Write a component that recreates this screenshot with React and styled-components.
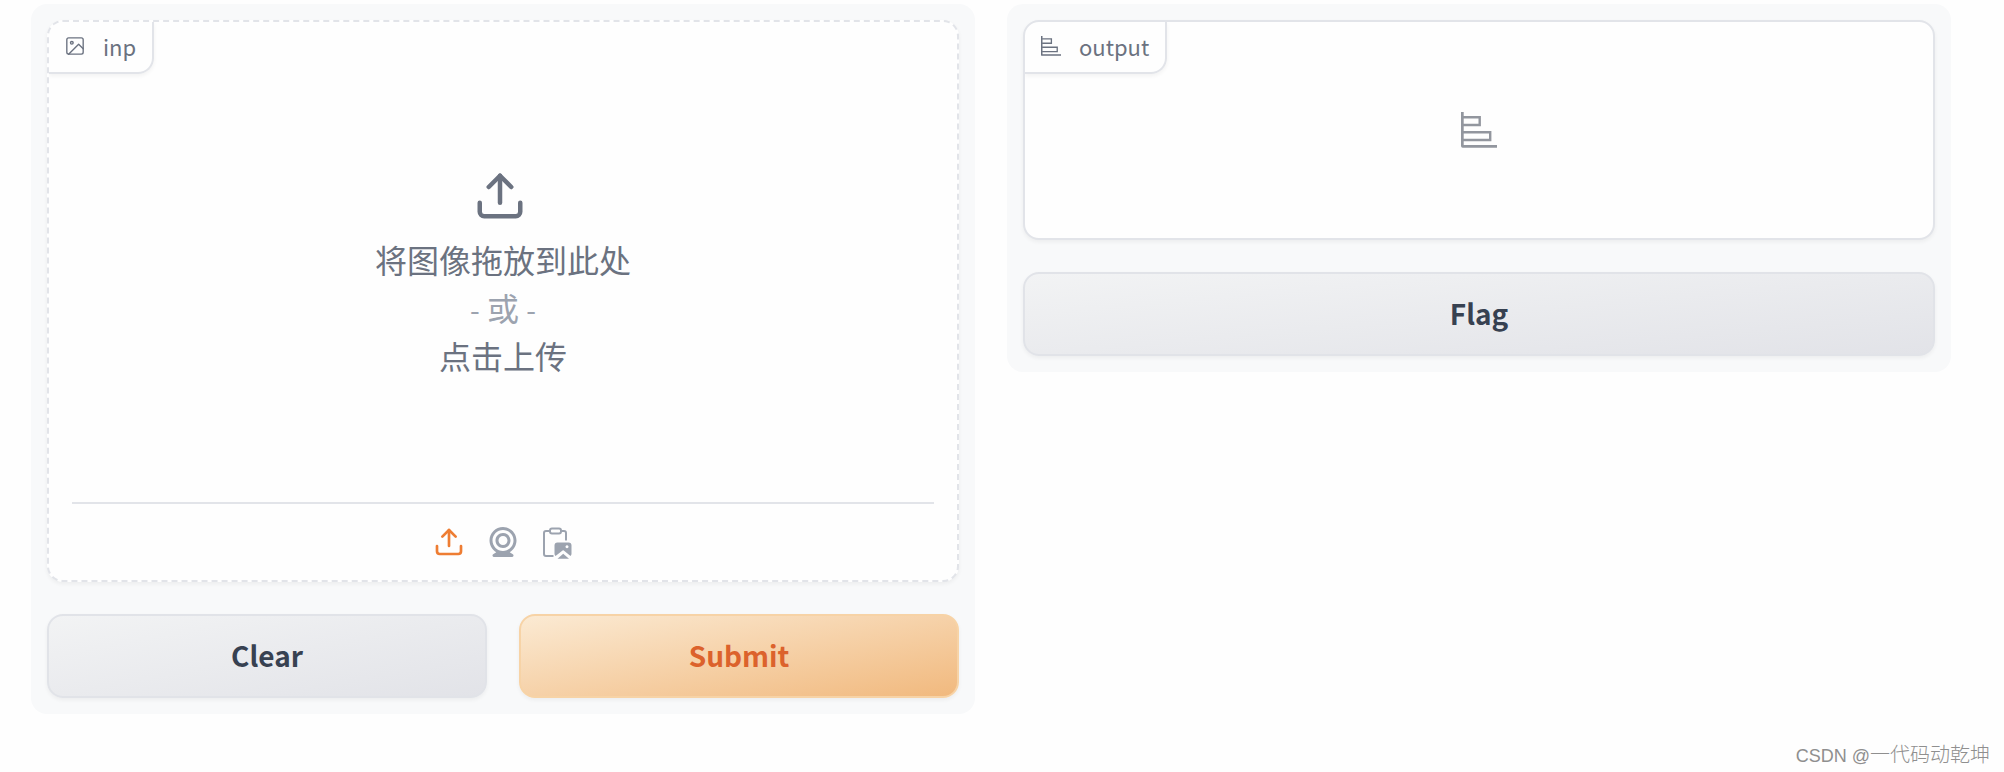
import styled, { createGlobalStyle, css } from 'styled-components';

const GlobalStyle = createGlobalStyle`
  *, *::before, *::after {
    box-sizing: border-box;
  }
  body {
    margin: 0;
    background: #fefefe;
    color: #6b7280;
    font-family: 'Noto Sans CJK SC', 'Open Sans', sans-serif;
  }
`;

const strokeProps = {
  fill: 'none',
  stroke: 'currentColor',
  strokeLinecap: 'round',
  strokeLinejoin: 'round',
  'aria-hidden': true,
};

const UploadIcon = ({ size }) => (
  <svg {...strokeProps} viewBox='0 0 24 24' width={size} height={size} strokeWidth='2'>
    <path d='M21 15v4a2 2 0 0 1-2 2H5a2 2 0 0 1-2-2v-4' />
    <polyline points='17 8 12 3 7 8' />
    <line x1='12' y1='3' x2='12' y2='15' />
  </svg>
);

const ImageIcon = () => (
  <svg {...strokeProps} viewBox='1 1 22 22' width='20' height='20' strokeWidth='1.5'>
    <rect x='3' y='3' width='18' height='18' rx='2' />
    <circle cx='8.5' cy='8.5' r='1.5' />
    <polyline points='21 15 16 10 5 21' />
  </svg>
);

const PlotIcon = ({ size }) => (
  <svg width={size} height={size} viewBox='0 0 36 36' fill='currentColor' aria-hidden>
    <path d='M0 0h2.700v33H36v2.700H1.700Q0 35.700 0 34z' />
    <path
      d='M2 5.300H18.700V13H2M2 20.300H29.200V28H2'
      fill='none'
      stroke='currentColor'
      strokeWidth='2.400'
    />
  </svg>
);

const WebcamIcon = () => (
  <svg width='36' height='36' viewBox='0 0 24 24' fill='currentColor' aria-hidden>
    <path d='M12 2c-4.963 0-9 4.038-9 9c0 3.328 1.82 6.232 4.513 7.79l-2.067 1.378A1 1 0 0 0 6 22h12a1 1 0 0 0 .555-1.832l-2.067-1.378C19.18 17.232 21 14.328 21 11c0-4.962-4.037-9-9-9zm0 16c-3.859 0-7-3.141-7-7c0-3.86 3.141-7 7-7s7 3.14 7 7c0 3.859-3.141 7-7 7z' />
    <path d='M12 6c-2.757 0-5 2.243-5 5s2.243 5 5 5s5-2.243 5-5s-2.243-5-5-5zm0 8c-1.654 0-3-1.346-3-3s1.346-3 3-3s3 1.346 3 3s-1.346 3-3 3z' />
  </svg>
);

const PasteIcon = () => (
  <svg width='36' height='36' viewBox='0 0 36 36' fill='none' aria-hidden>
    <g stroke='currentColor' strokeWidth='2'>
      <path d='M11 7H7a2 2 0 0 0-2 2v21a2 2 0 0 0 2 2h7.500M22 7h3a2 2 0 0 1 2 2v7.500' />
      <rect x='11' y='4.500' width='11' height='5' rx='2' />
    </g>
    <path
      fill='currentColor'
      fillRule='evenodd'
      d='M18.500 18.500h11a3 3 0 0 1 3 3v8.500a3 3 0 0 1-1 2l-6.700-5.500a1 1 0 0 0-1.200 0L16.500 32a3 3 0 0 1-1-2v-8.500a3 3 0 0 1 3-3zm9.500 2.800a1.500 1.500 0 1 0 .01 0zM18.500 34.800l5.700-5 5.800 5z'
    />
  </svg>
);

const App = () => {
  return (
    <>
      <GlobalStyle />
      <Main>
        <Panel>
          <Block $dashed>
            <Label htmlFor='inp'>
              <ImageIcon />
              inp
            </Label>
            <DropZone id='inp' type='button'>
              <IconWrap>
                <UploadIcon size={54} />
              </IconWrap>
              <span>将图像拖放到此处</span>
              <Or>
                <Dash>-</Dash> 或 <Dash>-</Dash>
              </Or>
              <span>点击上传</span>
            </DropZone>
            <Sources>
              <SourceButton type='button' aria-label='Upload file' $active>
                <UploadIcon size={32} />
              </SourceButton>
              <SourceButton type='button' aria-label='Capture from webcam'>
                <WebcamIcon />
              </SourceButton>
              <SourceButton type='button' aria-label='Paste from clipboard'>
                <PasteIcon />
              </SourceButton>
            </Sources>
          </Block>
          <Actions>
            <Button type='button'>Clear</Button>
            <Button type='button' $primary>
              Submit
            </Button>
          </Actions>
        </Panel>
        <Panel>
          <Block>
            <Label as='div'>
              <PlotIcon size={20} />
              output
            </Label>
            <Empty>
              <PlotIcon size={36} />
            </Empty>
          </Block>
          <Actions>
            <Button type='button'>Flag</Button>
          </Actions>
        </Panel>
      </Main>
      <Footer>
        <Latin>CSDN @</Latin>一代码动乾坤
      </Footer>
    </>
  );
};

const Main = styled.main`
  display: grid;
  grid-template-columns: 1fr 1fr;
  align-items: start;
  gap: 32px;
  padding: 4px 53px 0 31px;
`;

const Panel = styled.section`
  display: flex;
  flex-direction: column;
  gap: 32px;
  padding: 16px;
  border-radius: 16px;
  background: #f8f9fa;
`;

const Block = styled.div`
  position: relative;
  overflow: hidden;
  border: 2px ${({ $dashed }) => ($dashed ? 'dashed' : 'solid')} #e2e4e9;
  border-radius: 16px;
  background: #fefefe;
  box-shadow: 0 2px 4px rgba(0, 0, 0, 0.05);
`;

const Label = styled.label`
  position: absolute;
  top: 0;
  left: 0;
  display: flex;
  align-items: center;
  gap: 18px;
  height: 52px;
  padding: 0 16px 2px;
  border: solid #e2e4e9;
  border-width: 0 2px 2px 0;
  border-radius: 0 0 16px 0;
  box-shadow: 0 2px 4px rgba(0, 0, 0, 0.05);
  font-size: 22px;
  line-height: 32px;
`;

const DropZone = styled.button`
  display: flex;
  flex-direction: column;
  align-items: center;
  justify-content: center;
  width: 100%;
  height: 480px;
  padding: 24px 0 0;
  border: 0;
  background: none;
  color: #6b7280;
  font: inherit;
  font-size: 32px;
  line-height: 48px;
  cursor: pointer;
`;

const IconWrap = styled.span`
  display: flex;
  width: 60px;
  margin-bottom: 12px;
`;

const Or = styled.span`
  color: #9ca3af;
`;

const Dash = styled.span`
  font-size: 28px;
  line-height: 1;
`;

const Sources = styled.div`
  display: flex;
  align-items: center;
  justify-content: center;
  gap: 18px;
  height: 78px;
  margin: 0 23px;
  border-top: 2px solid #e2e4e9;
`;

const SourceButton = styled.button`
  display: flex;
  align-items: center;
  justify-content: center;
  width: 36px;
  height: 36px;
  padding: 0;
  border: 0;
  background: none;
  color: ${({ $active }) => ($active ? '#ee7d33' : '#9ca3af')};
  cursor: pointer;
`;

const Empty = styled.div`
  display: flex;
  align-items: center;
  justify-content: center;
  height: 216px;
  color: #92969e;
`;

const Actions = styled.div`
  display: flex;
  gap: 32px;
`;

const Button = styled.button`
  flex: 1;
  height: 84px;
  padding: 0 16px 2px;
  border: 2px solid #e1e3e8;
  border-radius: 16px;
  background: linear-gradient(to bottom right, #f2f3f4, #e2e3e8);
  box-shadow: 0 2px 4px rgba(0, 0, 0, 0.05);
  color: #374151;
  font: inherit;
  font-size: 28px;
  font-weight: 700;
  line-height: 40px;
  cursor: pointer;

  ${({ $primary }) =>
    $primary &&
    css`
      border-color: #f7d3a6;
      background: linear-gradient(to bottom right, #fbead3, #f1b97e);
      color: #dc622c;
    `}
`;

const Footer = styled.footer`
  padding: 24px 14px 0 0;
  color: #8f8f8f;
  font-size: 20px;
  font-weight: 300;
  line-height: 32px;
  text-align: right;
`;

const Latin = styled.span`
  font-family: 'Liberation Sans', sans-serif;
  font-size: 18px;
`;

export default App;
